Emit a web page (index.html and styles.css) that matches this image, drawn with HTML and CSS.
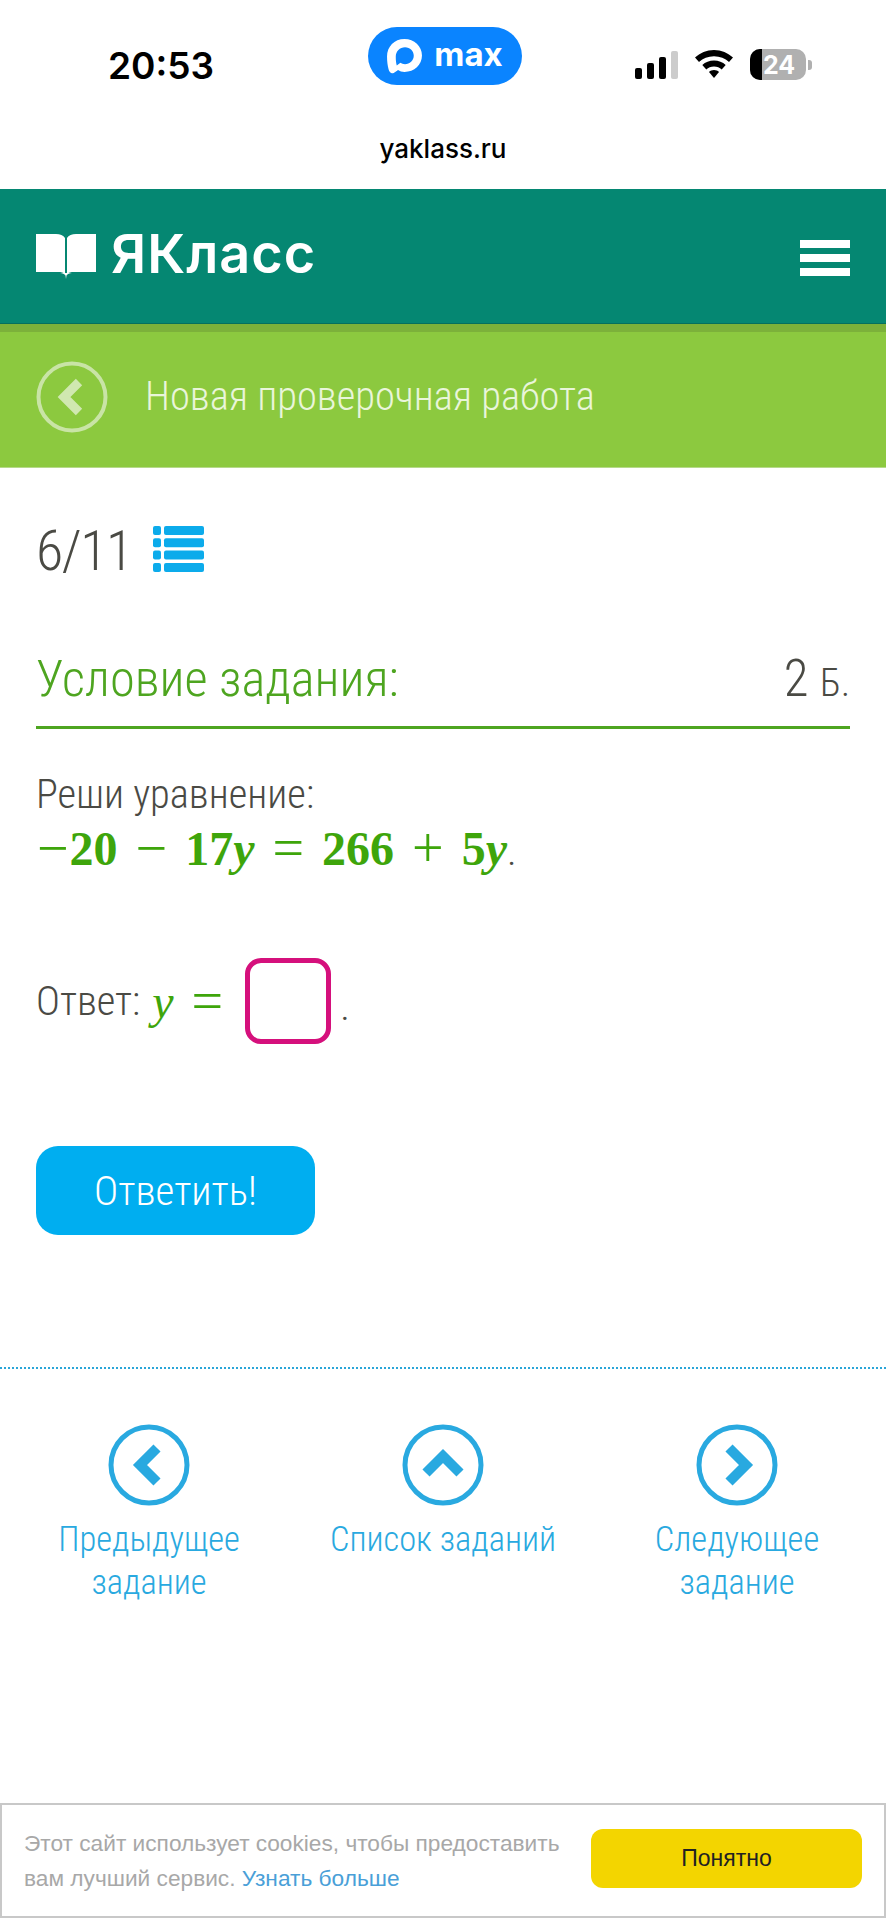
FILE: index.html

```html
<!DOCTYPE html>
<html lang="ru">
<head>
  <meta charset="UTF-8">
  <title>Новая проверочная работа | ЯКласс</title>
  <link rel="stylesheet" href="styles.css">
</head>
<body>

  <div class="status-bar">
    <span class="status-time">20:53</span>
    <div class="max-pill">
      <svg class="max-icon" viewBox="0 0 36 36">
        <path fill="#fff" fill-rule="evenodd" d="M18 1C8 1 1 8.500 1 18c0 5 .6 9 1.500 12.500C3.300 33.500 5 35 7.500 34c1.500-.6 3-1.800 4.200-2.800C13.500 32.500 15.500 33 18 33c9.500 0 17-7 17-16S27.500 1 18 1zm.5 8c5 0 8.500 3.800 8.500 8.300S23 25.500 18.500 25.500c-1.800 0-3.200-.5-4.500-1.300l-3.500 2.500c-.6-2-1-4.800-1-8.500C9.500 12.800 13.500 9 18.500 9z"/>
      </svg>
      <span class="max-text">max</span>
    </div>
    <div class="status-icons">
      <div class="signal">
        <span class="signal-bar bar-1"></span>
        <span class="signal-bar bar-2"></span>
        <span class="signal-bar bar-3"></span>
        <span class="signal-bar bar-4"></span>
      </div>
      <svg class="wifi" viewBox="0 0 38 28">
        <path d="M19 0C11.500 0 5 3 0 7.500l4 4.500C8 8.500 13 6.300 19 6.300S30 8.500 34 12l4-4.500C33 3 26.500 0 19 0z"/>
        <path d="M19 10.500c-4.600 0-8.600 1.700-11.700 4.500l4 4.500c2-1.800 4.600-2.900 7.700-2.900s5.700 1.100 7.700 2.900l4-4.500c-3.100-2.800-7.100-4.500-11.700-4.500z"/>
        <path d="M19 20c-2 0-3.700.7-5 1.900l5 6.100 5-6.100C22.700 20.700 21 20 19 20z"/>
      </svg>
      <div class="battery">
        <div class="battery-body"><span class="battery-level"></span><span class="battery-num">24</span></div>
        <span class="battery-nub"></span>
      </div>
    </div>
  </div>
  <div class="url-bar">yaklass.ru</div>

  <header class="site-header">
    <div class="logo">
      <svg class="logo-book" viewBox="0 0 60 45">
        <path fill="#fff" d="M0 0h20c4 0 7.500 1.500 9 4v36c-1.500-1.500-4-2-7-2H0z"/>
        <path fill="#fff" d="M60 0H40c-4 0-7.500 1.500-9 4v36c1.500-1.500 4-2 7-2h22z"/>
        <path fill="#fff" d="M24 39c2.500.3 4.500 1.200 5.500 2.500L30 45l.5-3.500c1-1.300 3-2.200 5.500-2.500z"/>
      </svg>
      <span class="logo-text">ЯКласс</span>
    </div>
    <div class="burger"><span></span><span></span><span></span></div>
  </header>

  <div class="title-bar">
    <svg class="back-icon" viewBox="0 0 72 72">
      <circle cx="36" cy="36" r="33.500" fill="none" stroke="#c9e4a6" stroke-width="4"/>
      <path d="M43 21 28 36l15 15" fill="none" stroke="#d0e8b0" stroke-width="9"/>
    </svg>
    <span class="title-text">Новая проверочная работа</span>
  </div>

  <main class="content">
    <div class="counter">
      <span class="counter-num">6/11</span>
      <svg class="list-icon" viewBox="0 0 51 46">
        <rect x="0" y="0" width="8" height="9" rx="2"/><rect x="11" y="0" width="40" height="9" rx="2"/>
        <rect x="0" y="12.300" width="8" height="9" rx="2"/><rect x="11" y="12.300" width="40" height="9" rx="2"/>
        <rect x="0" y="24.600" width="8" height="9" rx="2"/><rect x="11" y="24.600" width="40" height="9" rx="2"/>
        <rect x="0" y="37" width="8" height="9" rx="2"/><rect x="11" y="37" width="40" height="9" rx="2"/>
      </svg>
    </div>

    <div class="task-head">
      <h2>Условие задания:</h2>
      <span class="points">2 <small>Б.</small></span>
    </div>

    <div class="task-text">
      <p>Реши уравнение:</p>
      <p class="math-line"><span class="math"><span class="op">−</span><b>20</b> <span class="op">−</span> <b>17</b><i>y</i> <span class="op">=</span> <b>266</b> <span class="op">+</span> <b>5</b><i>y</i></span>.</p>
    </div>

    <div class="answer">
      <span>Ответ:</span>
      <span class="math answer-math"><i>y</i> <span class="op">=</span></span>
      <span class="answer-box"></span>
      <span class="answer-dot">.</span>
    </div>

    <button class="submit-button">Ответить!</button>
  </main>

  <nav class="task-nav">
    <a class="nav-item">
      <svg class="nav-icon" viewBox="0 0 82 82"><circle cx="41" cy="41" r="38"/><path d="M49 24 32 41l17 17"/></svg>
      <span>Предыдущее<br>задание</span>
    </a>
    <a class="nav-item">
      <svg class="nav-icon" viewBox="0 0 82 82"><circle cx="41" cy="41" r="38"/><path d="M24 49 41 32l17 17"/></svg>
      <span>Список заданий</span>
    </a>
    <a class="nav-item">
      <svg class="nav-icon" viewBox="0 0 82 82"><circle cx="41" cy="41" r="38"/><path d="M33 24l17 17-17 17"/></svg>
      <span>Следующее<br>задание</span>
    </a>
  </nav>

  <div class="cookie-bar">
    <p>Этот сайт использует cookies, чтобы предоставить вам лучший сервис. <a>Узнать больше</a></p>
    <button class="cookie-button">Понятно</button>
  </div>

</body>
</html>
```

FILE: styles.css

```css
body {
  margin: 0;
  height: 1920px;
  overflow: hidden;
  background: #ffffff;
  font-family: 'Roboto', 'Liberation Sans', sans-serif;
  font-weight: 300;
  font-stretch: 75%;
  color: #4a4a44;
  position: relative;
}

p, h2 {
  margin: 0;
  font-weight: 300;
}

.status-bar {
  height: 118px;
  box-sizing: border-box;
  padding: 27px 74px 0 108px;
  display: flex;
  justify-content: space-between;
  align-items: flex-start;
  font-family: 'Inter', 'Liberation Sans', sans-serif;
  font-stretch: normal;
}

.status-time {
  margin-top: 19px;
  font-size: 37px;
  line-height: 40px;
  font-weight: 600;
  color: #000;
}

.max-pill {
  width: 154px;
  height: 58px;
  margin-left: 40px;
  background: #0a84ff;
  border-radius: 29px;
  display: flex;
  align-items: center;
  justify-content: center;
  gap: 11px;
}

.max-icon {
  width: 37px;
  height: 37px;
}

.max-text {
  font-size: 33px;
  line-height: 36px;
  font-weight: 700;
  color: #fff;
  margin-top: -4px;
}

.status-icons {
  margin-top: 23px;
  display: flex;
  align-items: flex-start;
  gap: 17px;
}

.signal {
  display: flex;
  align-items: flex-end;
  gap: 5px;
  height: 29px;
}

.signal-bar {
  width: 7px;
  background: #000;
  border-radius: 2px;
}

.bar-1 { height: 11px; }
.bar-2 { height: 16px; }
.bar-3 { height: 22px; }
.bar-4 { height: 28px; background: #cccccc; }

.wifi {
  width: 38px;
  height: 28px;
}

.battery {
  display: flex;
  align-items: center;
  gap: 2px;
  margin-top: -1px;
}

.battery-body {
  width: 56px;
  height: 31px;
  background: #b0b0b0;
  border-radius: 10px;
  overflow: hidden;
  display: flex;
  align-items: center;
}

.battery-level {
  width: 12px;
  height: 100%;
  background: #000;
}

.battery-num {
  margin-left: 1px;
  font-size: 25px;
  font-weight: 700;
  color: #fff;
}

.battery-nub {
  width: 4px;
  height: 10px;
  background: #b0b0b0;
  border-radius: 0 3px 3px 0;
}

.url-bar {
  height: 71px;
  text-align: center;
  font-family: 'Inter', 'Liberation Sans', sans-serif;
  font-stretch: normal;
  font-size: 26px;
  line-height: 30px;
  font-weight: 500;
  color: #000;
  padding-top: 16px;
  box-sizing: border-box;
}

.site-header {
  height: 135px;
  box-sizing: border-box;
  background: #058772;
  border-bottom: 1px solid #06705e;
  padding: 45px 36px 0;
  display: flex;
  justify-content: space-between;
  align-items: flex-start;
}

.logo {
  display: flex;
  align-items: flex-start;
  gap: 15px;
}

.logo-book {
  width: 60px;
  height: 45px;
}

.logo-text {
  font-family: 'Inter', 'Liberation Sans', sans-serif;
  font-stretch: normal;
  font-size: 54px;
  line-height: 39px;
  font-weight: 600;
  letter-spacing: 1px;
  color: #fff;
}

.burger {
  width: 50px;
  margin-top: 6px;
  display: flex;
  flex-direction: column;
  gap: 6px;
}

.burger span {
  height: 8px;
  background: #fff;
}

.title-bar {
  height: 144px;
  box-sizing: border-box;
  background: #8cc93f;
  border-top: 8px solid #7cb13a;
  border-bottom: 1px solid #b6d98a;
  padding: 0 0 5px 36px;
  display: flex;
  align-items: center;
  gap: 37px;
}

.back-icon {
  width: 72px;
  height: 72px;
}

.title-text {
  font-size: 40.500px;
  margin-top: -2px;
  color: #e9f5da;
}

.content {
  padding: 55px 36px 0;
}

.counter {
  display: flex;
  align-items: center;
  gap: 21px;
  height: 52px;
}

.counter-num {
  font-size: 56px;
  line-height: 52px;
  letter-spacing: -1.500px;
  margin-top: 3px;
}

.list-icon {
  width: 51px;
  height: 46px;
  fill: #0cabeb;
}

.task-head {
  margin-top: 75px;
  height: 76px;
  border-bottom: 3px solid #4ea520;
  display: flex;
  justify-content: space-between;
  align-items: flex-start;
}

.task-head h2 {
  font-size: 50.500px;
  line-height: 58px;
  color: #4ea520;
}

.points {
  font-size: 51px;
  line-height: 58px;
}

.points small {
  font-size: 38px;
}

.task-text {
  margin-top: 43px;
  font-size: 40.500px;
  line-height: 44px;
}

.math-line {
  margin-top: 7px;
  line-height: 52px;
}

.math-line i {
  font-weight: 700;
}

.math {
  font-family: 'Liberation Serif', 'DejaVu Serif', serif;
  font-stretch: normal;
  font-size: 48px;
  font-weight: 400;
  word-spacing: 5px;
  color: #3ea50b;
}

.op {
  font-size: 56px;
  line-height: 40px;
  padding: 0 1px;
  vertical-align: -2px;
}

.answer {
  margin-top: 81px;
  display: flex;
  align-items: center;
  font-size: 40.500px;
  height: 86px;
}

.answer-math {
  margin-left: 12px;
}

.answer-box {
  width: 86px;
  height: 86px;
  box-sizing: border-box;
  margin-left: 21px;
  border: 5px solid #d5107c;
  border-radius: 16px;
}

.answer-dot {
  margin-left: 9px;
  margin-top: 10px;
}

.submit-button {
  display: block;
  margin-top: 102px;
  width: 279px;
  height: 89px;
  background: #00aef0;
  border: none;
  border-radius: 22px;
  color: #fff;
  font-family: inherit;
  font-weight: 300;
  font-stretch: inherit;
  font-size: 41px;
}

.task-nav {
  margin-top: 132px;
  border-top: 2px dotted #2aa5d8;
  padding: 55px 0 0;
  display: grid;
  grid-template-columns: repeat(3, 294px);
  justify-content: center;
  font-size: 34.500px;
  line-height: 43px;
  text-align: center;
  color: #29a9e0;
}

.nav-item {
  display: flex;
  flex-direction: column;
  align-items: center;
}

.nav-icon {
  width: 82px;
  height: 82px;
  margin-bottom: 12px;
  fill: none;
  stroke: #29a9e0;
  stroke-width: 5;
}

.nav-icon path {
  stroke-width: 10;
}

.cookie-bar {
  position: absolute;
  left: 0;
  right: 0;
  bottom: 2px;
  height: 115px;
  box-sizing: border-box;
  border: 2px solid #c8c8c8;
  background: #ffffff;
  padding: 0 22px;
  display: flex;
  align-items: center;
  justify-content: space-between;
  font-family: 'Liberation Sans', sans-serif;
  font-stretch: normal;
  font-weight: 400;
}

.cookie-bar p {
  width: 552px;
  font-size: 22.700px;
  line-height: 35px;
  color: #a8a8a8;
  font-weight: 400;
}

.cookie-bar a {
  color: #4a9fd8;
}

.cookie-button {
  width: 271px;
  height: 59px;
  margin-top: -5px;
  background: #f3d500;
  border: none;
  border-radius: 12px;
  font-family: inherit;
  font-size: 23px;
  color: #222;
}
```
